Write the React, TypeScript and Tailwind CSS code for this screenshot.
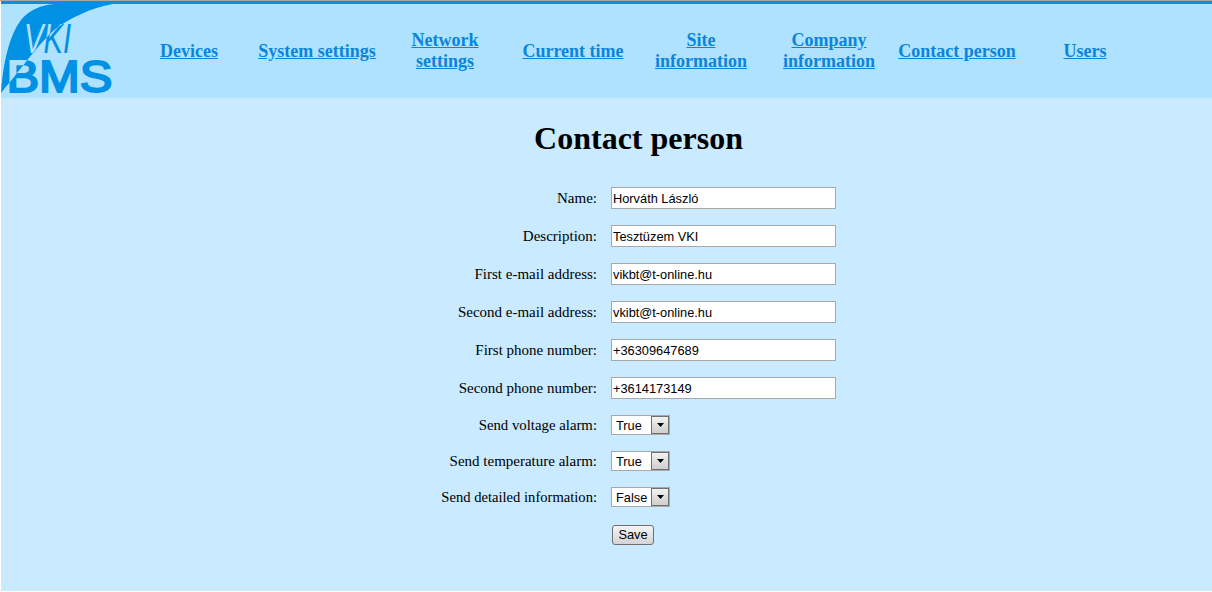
const navItems: { label: string[] }[] = [
  { label: ["Devices"] },
  { label: ["System settings"] },
  { label: ["Network", "settings"] },
  { label: ["Current time"] },
  { label: ["Site", "information"] },
  { label: ["Company", "information"] },
  { label: ["Contact person"] },
  { label: ["Users"] },
];

const textFields = [
  ["Name:", "Horváth László"],
  ["Description:", "Tesztüzem VKI"],
  ["First e-mail address:", "vikbt@t-online.hu"],
  ["Second e-mail address:", "vkibt@t-online.hu"],
  ["First phone number:", "+36309647689"],
  ["Second phone number:", "+3614173149"],
];

const selectFields = [
  { label: "Send voltage alarm:", value: "True", size: "text-[14.8px]" },
  { label: "Send temperature alarm:", value: "True", size: "text-[15px]" },
  { label: "Send detailed information:", value: "False", size: "text-[14.6px]" },
];

function LogoText({ fill }: { fill: string }) {
  return (
    <g fontFamily="'Liberation Sans', sans-serif" fill={fill}>
      <text x="23" y="49" fontSize="43" fontStyle="italic" textLength="47" lengthAdjust="spacingAndGlyphs">VKI</text>
      <text x="5.5" y="87.5" fontSize="44" stroke={fill} strokeWidth="2" textLength="106" lengthAdjust="spacingAndGlyphs">BMS</text>
    </g>
  );
}

function Logo() {
  const swoosh = "M0 89 C2 60 8 32 20 16 C28 6 40 1 54 0 L112 0 C90 4 68 14 52 27 C36 42 16 70 0 89 Z";
  return (
    <svg width="112" height="94" viewBox="0 0 112 94" className="block shrink-0 overflow-visible">
      <defs>
        <clipPath id="swoosh-clip">
          <path d={swoosh} />
        </clipPath>
      </defs>
      <path d={swoosh} fill="#0090e4" />
      <LogoText fill="#0090e4" />
      <g clipPath="url(#swoosh-clip)">
        <LogoText fill="#aee2ff" />
      </g>
    </svg>
  );
}

function FakeSelect({ value }: { value: string }) {
  return (
    <div className="relative h-[20px] w-[59px] border border-[#a9a9a9] bg-white">
      <span className="absolute left-[4px] top-[2px] text-[12.8px] leading-[15px] text-black">{value}</span>
      <span className="absolute right-0 top-0 flex h-[18px] w-[18px] items-center justify-center border border-[#707070] bg-gradient-to-b from-[#f2f2f2] to-[#cfcfcf]">
        <svg width="7" height="4" viewBox="0 0 7 4">
          <path d="M0 0H7L3.5 4Z" fill="#000" />
        </svg>
      </span>
    </div>
  );
}

export default function App() {
  return (
    <div className="h-[592px] w-[1212px] overflow-hidden border-t border-[#a8a8a8] bg-white pb-px pl-px font-['Liberation_Serif',serif] text-black">
      <div className="flex h-full flex-col bg-[#c9eaff]">
        <header className="flex h-[97px] shrink-0 items-end border-t-[3px] border-[#0090e4] bg-[#aee2ff]">
          <Logo />
          <nav className="ml-[12px] grid h-[94px] w-[1024px] grid-cols-8">
            {navItems.map((item) => (
              <div key={item.label.join(" ")} className="flex items-center justify-center text-center">
                <a
                  href="#"
                  className="whitespace-nowrap text-[18px] font-bold leading-[21px] text-[#0a84dc] underline"
                >
                  {item.label.map((line) => (
                    <span key={line} className="block">
                      {line}
                    </span>
                  ))}
                </a>
              </div>
            ))}
          </nav>
        </header>
        <main className="flex flex-col items-center pl-[64px]">
          <h1 className="mt-[21px] h-[41px] text-[32px] font-bold leading-[38px]">Contact person</h1>
          <form className="mt-[19px] w-[395px]">
            {textFields.map(([label, value]) => (
              <div key={label} className="flex h-[38px] items-center">
                <label className="w-[156px] whitespace-nowrap text-right text-[15px]">{label}</label>
                <input
                  readOnly
                  value={value}
                  className="ml-[14px] h-[22px] w-[225px] border border-[#a9a9a9] bg-white px-[1px] font-['Liberation_Sans',sans-serif] text-[12.8px] text-black"
                />
              </div>
            ))}
            {selectFields.map(({ label, value, size }) => (
              <div key={label} className="flex h-[36px] items-center">
                <label className={`w-[156px] whitespace-nowrap pt-[1px] text-right ${size}`}>{label}</label>
                <div className="ml-[14px] font-['Liberation_Sans',sans-serif]">
                  <FakeSelect value={value} />
                </div>
              </div>
            ))}
            <div className="flex h-[38px] items-center pl-[171px] pt-[1px]">
              <button
                type="button"
                className="h-[20px] w-[42px] rounded-[3px] border border-[#707070] bg-gradient-to-b from-[#f4f4f4] to-[#d4d4d4] pt-[1px] font-['Liberation_Sans',sans-serif] text-[12.8px] leading-none text-black"
              >
                Save
              </button>
            </div>
          </form>
        </main>
      </div>
    </div>
  );
}
